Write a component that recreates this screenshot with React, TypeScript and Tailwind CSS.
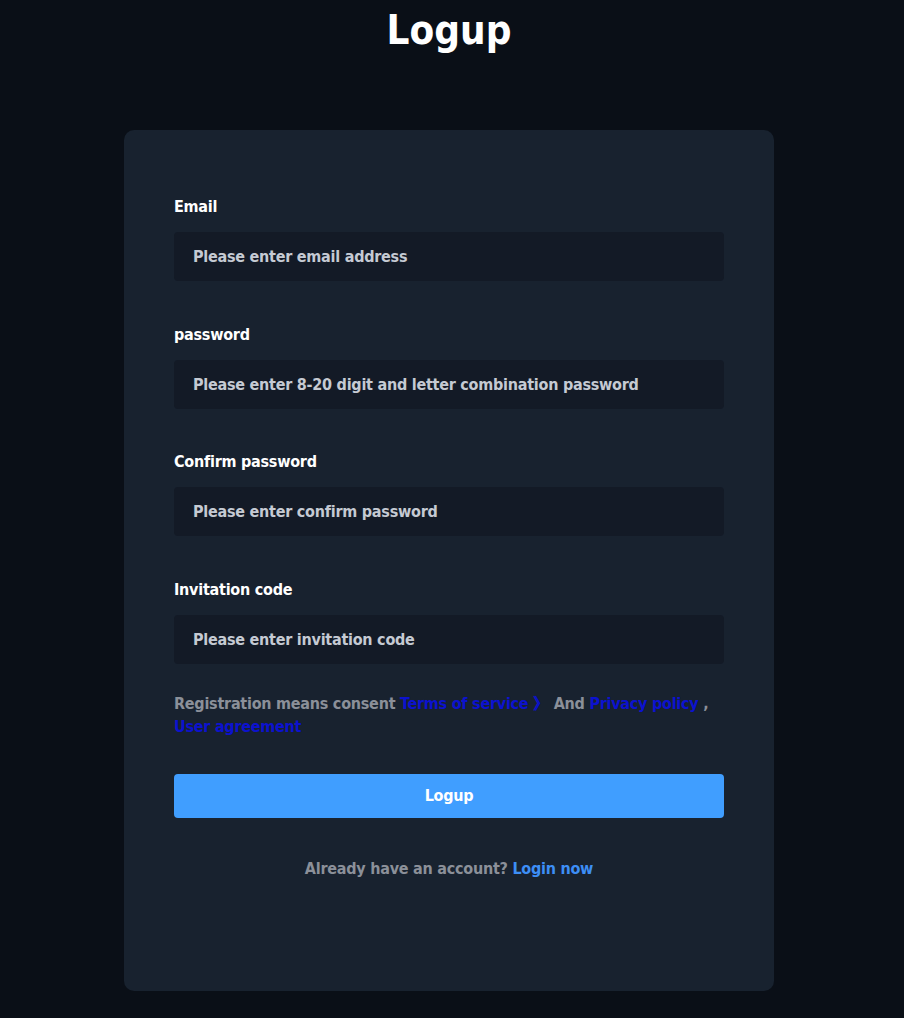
export default function App() {
  const fields = [
    { label: "Email", placeholder: "Please enter email address" },
    { label: "password", placeholder: "Please enter 8-20 digit and letter combination password" },
    { label: "Confirm password", placeholder: "Please enter confirm password" },
    { label: "Invitation code", placeholder: "Please enter invitation code" },
  ]

  return (
    <div
      className="min-h-[1018px] bg-[#0a0f17] font-bold"
      style={{ fontFamily: '"DejaVu Sans", sans-serif', fontStretch: "condensed" }}
    >
      <div className="w-[898px]">
        <h1 className="pt-[4px] text-center text-[40px] leading-[52px] text-white">Logup</h1>

        <div className="mx-auto mt-[74px] w-[650px] rounded-[10px] bg-[#18222f] px-[50px] pb-[110px] pt-[66px] tracking-[-0.25px]">
          <form className="flex flex-col gap-[42.5px]">
            {fields.map((f) => (
              <div key={f.label} className="flex flex-col gap-[14px]">
                <label className="text-[16px] leading-[22px] text-white">{f.label}</label>
                <input
                  className="h-[49px] w-full rounded-[4px] bg-[#131a26] px-[19px] text-[16px] text-white outline-none placeholder:text-[#c5cad3]"
                  placeholder={f.placeholder}
                />
              </div>
            ))}
          </form>

          <p className="mt-[28px] text-[16px] leading-[23px] text-[#8b9099]">
            Registration means consent{" "}
            <a className="text-[#0c12cf]">Terms of service 》</a>{"  "}And{" "}
            <a className="text-[#0c12cf]">Privacy policy</a> ,{" "}
            <a className="text-[#0c12cf]">User agreement</a>
          </p>

          <button
            type="button"
            className="mt-[36px] h-[44px] w-full rounded-[4px] bg-[#409eff] text-[16px] text-white"
          >
            Logup
          </button>

          <p className="mt-[39px] text-center text-[16px] text-[#8b9099]">
            Already have an account? <a className="text-[#3d8ef5]">Login now</a>
          </p>
        </div>
      </div>
    </div>
  )
}
